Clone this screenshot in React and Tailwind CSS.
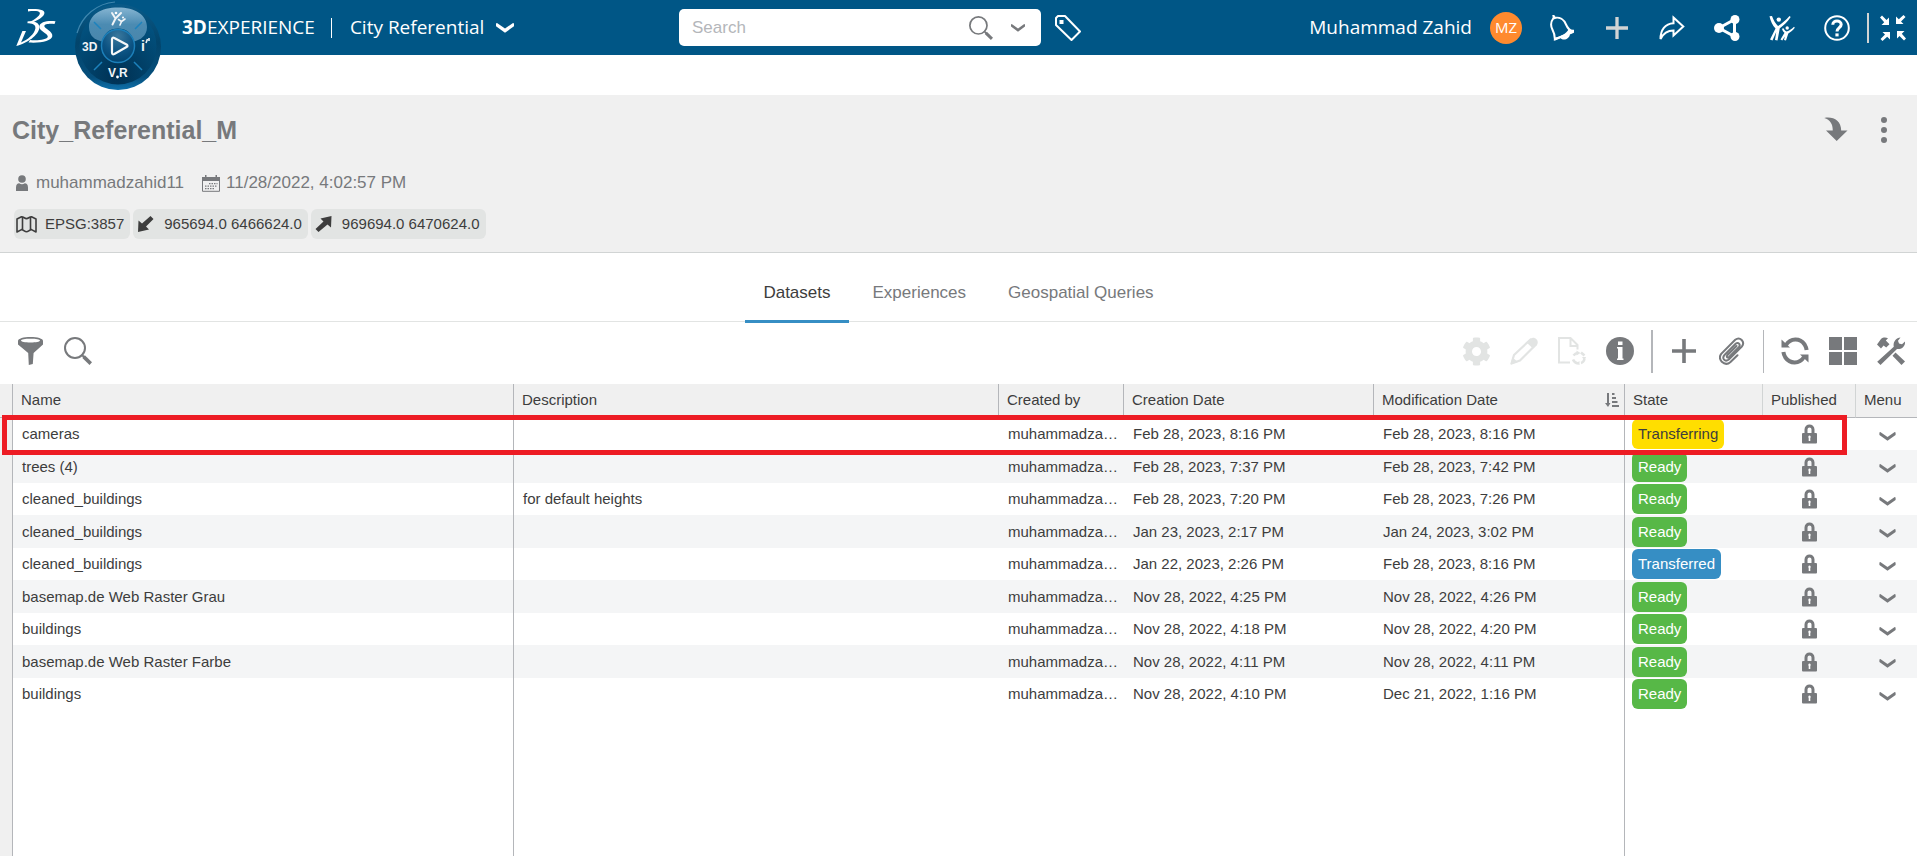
import React from "react";
import { FaCog } from "react-icons/fa";

const ROWS = [
  { name: "cameras", description: "", created: "Feb 28, 2023, 8:16 PM", modified: "Feb 28, 2023, 8:16 PM", state: "Transferring" },
  { name: "trees (4)", description: "", created: "Feb 28, 2023, 7:37 PM", modified: "Feb 28, 2023, 7:42 PM", state: "Ready" },
  { name: "cleaned_buildings", description: "for default heights", created: "Feb 28, 2023, 7:20 PM", modified: "Feb 28, 2023, 7:26 PM", state: "Ready" },
  { name: "cleaned_buildings", description: "", created: "Jan 23, 2023, 2:17 PM", modified: "Jan 24, 2023, 3:02 PM", state: "Ready" },
  { name: "cleaned_buildings", description: "", created: "Jan 22, 2023, 2:26 PM", modified: "Feb 28, 2023, 8:16 PM", state: "Transferred" },
  { name: "basemap.de Web Raster Grau", description: "", created: "Nov 28, 2022, 4:25 PM", modified: "Nov 28, 2022, 4:26 PM", state: "Ready" },
  { name: "buildings", description: "", created: "Nov 28, 2022, 4:18 PM", modified: "Nov 28, 2022, 4:20 PM", state: "Ready" },
  { name: "basemap.de Web Raster Farbe", description: "", created: "Nov 28, 2022, 4:11 PM", modified: "Nov 28, 2022, 4:11 PM", state: "Ready" },
  { name: "buildings", description: "", created: "Nov 28, 2022, 4:10 PM", modified: "Dec 21, 2022, 1:16 PM", state: "Ready" },
];

const STATE_STYLES = {
  Transferring: "bg-[#ffde00] text-[#3d3d3d]",
  Ready: "bg-[#57b847] text-white",
  Transferred: "bg-[#368ec4] text-white",
};

function BrandLogo() {
  return (
    <svg viewBox="0 0 40 38" className="h-[38px] w-10" fill="#fff" aria-hidden="true">
      <path d="M12 0C19 -.4 25.500 .2 27.600 2C31 5.500 23.500 11 14 14.200L13 13.500C19 10.600 24.600 6.500 23.800 3.800C23.200 1.600 17 2 12 2.400Z" />
      <path d="M11.500 12.400C17 11.600 23.600 13 23.400 18.500C23 26 11 34.500 .3 37L6.400 22H10L5 33.400C11.500 31 18.500 25 19.400 19.500C20 15 15.500 14.200 11.500 14.200Z" />
      <path d="M39.500 12.300L38.500 15C34 14.300 28.500 14.800 28.300 17C28.200 19.500 37.300 22.500 36.300 27.300C35.300 32 25 34.300 12.500 33.500L14 31C22 31.600 31.500 30.800 31.800 27.500C32 24.500 22.800 22 23.300 17.500C23.800 13 31.500 11.300 39.500 12.300Z" />
    </svg>
  );
}

function Compass() {
  return (
    <svg viewBox="0 0 88 92" className="h-[92px] w-[88px]" aria-hidden="true">
      <defs>
        <linearGradient id="rim" x1="0" y1="0" x2="0" y2="1">
          <stop offset="0" stopColor="#0a5a88" />
          <stop offset="0.45" stopColor="#02446b" />
          <stop offset="0.85" stopColor="#064f7c" />
          <stop offset="1" stopColor="#0f71ab" />
        </linearGradient>
        <radialGradient id="face" cx="0.5" cy="0.9" r="0.75">
          <stop offset="0" stopColor="#003153" />
          <stop offset="1" stopColor="#02507d" />
        </radialGradient>
        <linearGradient id="gloss" x1="0" y1="0" x2="0" y2="1">
          <stop offset="0" stopColor="#86b5d2" />
          <stop offset="0.5" stopColor="#4b8bb2" />
          <stop offset="1" stopColor="#4a86ab" />
        </linearGradient>
        <radialGradient id="hub" cx="0.5" cy="0.2" r="0.8">
          <stop offset="0" stopColor="#3a789d" />
          <stop offset="0.6" stopColor="#0d5484" />
          <stop offset="1" stopColor="#024470" />
        </radialGradient>
      </defs>
      <circle cx="44" cy="47" r="43" fill="url(#rim)" />
      <path d="M3 33A43 43 0 0 1 41 2" fill="none" stroke="#3f86ae" strokeWidth="1.200" />
      <circle cx="44" cy="46" r="38.500" fill="url(#face)" />
      <path d="M15 27C15 15 27 7.500 44 7.500S73 15 73 27C73 36 66 40 60 41.500C58 33 52 28.500 44 28.500S30 33 28 41.500C21 40 15 36 15 27Z" fill="url(#gloss)" />
      <path d="M20 22L27 29M68 22L61 29M20 70L28 62M68 70L60 62" stroke="#1d82bd" strokeWidth="1.500" />
      <circle cx="44" cy="46" r="16.500" fill="url(#hub)" stroke="#1c7fb9" strokeWidth="1.500" />
      <path d="M38 39.500Q38 37 40.300 38L52.500 44.500Q54.500 46 52.500 47L40.300 54Q38 55 38 52.500Z" fill="none" stroke="#f4f7f9" strokeWidth="2.200" strokeLinejoin="round" />
      <g stroke="#f0f4f7" fill="none" strokeLinecap="round">
        <path d="M38 13L41.500 18.500L38.500 24.500M41.500 18.500L47 13" strokeWidth="2" />
        <path d="M44.500 19.500L47.500 21.500L46 25M47.500 21.500L51 19" strokeWidth="1.600" />
      </g>
      <circle cx="42" cy="13" r="1.300" fill="#fff" />
      <circle cx="49" cy="17.400" r="1" fill="#fff" />
      <g fill="#f0f4f7" fontFamily="'Liberation Sans Narrow', 'Liberation Sans', Arial, sans-serif" fontWeight="700">
        <text x="8" y="50.500" fontSize="12">3D</text>
        <text x="34" y="77" fontSize="12">V</text>
        <text x="45" y="77" fontSize="12">R</text>
        <text x="67" y="51" fontSize="14">i</text>
      </g>
      <circle cx="43.500" cy="77" r="1.400" fill="#fff" />
      <path d="M72 43L73.500 39M75 41V38" stroke="#f0f4f7" strokeWidth="1.600" />
    </svg>
  );
}

function Icon({ box = "0 0 26 26", className = "size-[26px]", children, ...rest }) {
  return (
    <svg viewBox={box} className={className} aria-hidden="true" {...rest}>
      {children}
    </svg>
  );
}

function ChevronIcon({ className }) {
  return (
    <Icon box="0 0 18 10" className={className} fill="currentColor">
      <path d="M0 .6L1 0L9 5.600L17 0L18 .6V3.200L9 9.800L0 3.200Z" />
    </Icon>
  );
}

function SearchIcon({ className }) {
  return (
    <Icon box="0 0 28 28" className={className} fill="none" stroke="currentColor">
      <circle cx="11" cy="11" r="10" strokeWidth="2" />
      <path d="M17.500 17.500L20.500 20.500" strokeWidth="2" />
      <path d="M19.600 19.600L26.800 26.600" strokeWidth="3.600" />
    </Icon>
  );
}

function BellIcon() {
  return (
    <Icon fill="none" stroke="currentColor" strokeLinejoin="round">
      <path d="M4.200 3.500C1.600 7 1.400 10.500 3.400 14.500C5.500 18.500 6 20.500 5.800 24.500L24 17C20.500 15.500 18.600 13.200 17 9.500C14.800 4.300 10.500 2 6.500 2.800Z" strokeWidth="2" />
      <path d="M3.300 0H5.300L7 3L4 4.500Z" fill="currentColor" stroke="none" />
      <path d="M4.600 25.800L25 17.300V14.800L19.500 14.500C17 18.500 13 21 6 22.500ZM11.500 23C14 26 20.500 24.500 21 19Z" fill="currentColor" stroke="none" />
    </Icon>
  );
}

function PlusIcon({ className }) {
  return (
    <Icon box="0 0 24 24" className={className} stroke="currentColor" strokeWidth="3.600">
      <path d="M12 0V24M0 12H24" />
    </Icon>
  );
}

function ForwardIcon() {
  return (
    <Icon fill="none" stroke="currentColor" strokeWidth="2">
      <path d="M14.500 2.500L24.300 11.500L14.500 20.500V15.500C9 15.500 4.500 18 1.500 24C1.500 15 6 8.600 14.500 8.200Z" strokeLinejoin="miter" />
    </Icon>
  );
}

function NodesIcon() {
  return (
    <Icon fill="currentColor">
      <path d="M5 13L20.500 4.500V21.500Z" fill="none" stroke="currentColor" strokeWidth="3" />
      <circle cx="5" cy="13" r="5" />
      <circle cx="21" cy="4.500" r="4.500" />
      <circle cx="21" cy="21.500" r="4.500" />
    </Icon>
  );
}

function PeopleIcon() {
  return (
    <Icon fill="currentColor">
      <path d="M.5 1.200L3 1C4.500 5.500 6.500 8.500 9 11C13 8.500 17 5 20.500 1L21.700 2C18.500 7 14.500 10.500 10.800 13.200L8.500 25.500L6 25L7.200 17L3.500 25.500L1 24.500L6.500 13.500C3.500 10.500 1.500 6 .5 1.200Z" />
      <path d="M13 13.800L14.500 13.300C15.200 14.800 16.200 15.800 17.600 16.600C20.500 15.500 23 14 25 11.800L25.800 12.800C24 15.500 21.800 17.200 19.300 18.400L17 25.500L15 25L15.800 21.500L13.300 25.500L11.500 24.500L15.500 17.800C14.200 16.800 13.400 15.500 13 13.800Z" />
      <circle cx="9.800" cy="4.600" r="2.200" />
      <circle cx="18.200" cy="13" r="1.700" />
    </Icon>
  );
}

function HelpIcon() {
  return (
    <Icon fill="none" stroke="currentColor">
      <circle cx="13" cy="13" r="11.800" strokeWidth="2" />
      <path d="M8.800 9.800C8.800 4.800 17.200 4.800 17.200 9.600C17.200 12.800 13 12.600 13 16.600" strokeWidth="3" />
      <rect x="11.400" y="18.400" width="3.200" height="3" fill="currentColor" stroke="none" />
    </Icon>
  );
}

function CollapseIcon() {
  return (
    <Icon fill="currentColor">
      {[0, 90, 180, 270].map((angle) => (
        <g key={angle} transform={`rotate(${angle} 13 13)`}>
          <path d="M2 .5L6.500 5L9 2.500V10H1.500L4.200 7.200L0 2.500Z" />
        </g>
      ))}
    </Icon>
  );
}

function TagIcon() {
  return (
    <Icon fill="none" stroke="currentColor" strokeWidth="2" strokeLinejoin="round">
      <path d="M1 10V3L3 1H10L25 16.500L16.500 25Z" />
      <rect x="4.500" y="5" width="4" height="4" fill="currentColor" stroke="none" />
    </Icon>
  );
}

function PersonIcon() {
  return (
    <Icon box="0 0 12 16" className="h-4 w-3" fill="currentColor">
      <circle cx="6" cy="4" r="3.800" />
      <path d="M0 16V12.500C0 9.500 1.500 8.300 3.200 8.300C5 9.500 7 9.500 8.800 8.300C10.500 8.300 12 9.500 12 12.500V16Z" />
    </Icon>
  );
}

function CalendarIcon() {
  return (
    <Icon box="0 0 18 17" className="h-[17px] w-[18px]" fill="currentColor">
      <path d="M0 2H3V0H4.500V2H13.500V0H15V2H18V6H0Z" />
      <path d="M.5 5.500V16.300H17.500V5.500" fill="none" stroke="currentColor" />
      <path d="M7 8.700H15.500M3 11.200H15.500M3 13.700H12" stroke="currentColor" strokeWidth="1.300" strokeDasharray="1.500 1" />
    </Icon>
  );
}

function MapIcon() {
  return (
    <Icon box="0 0 21 17" className="h-[17px] w-[21px]" fill="none" stroke="currentColor" strokeWidth="1.600" strokeLinejoin="round">
      <path d="M1 3L5.500 .8C8 1 8.500 2.600 10.500 2.600S13 1 15.500 .8L20 3V16L15.500 13.600C13 13.800 12.500 15.800 10.500 15.800S8 13.800 5.500 13.600L1 16ZM6.500 1V13.600M14.500 1V13.600" />
    </Icon>
  );
}

function SouthWestIcon() {
  return (
    <Icon box="0 0 17 16" className="h-4 w-[17px]" fill="currentColor">
      <path d="M13.500 0L16.500 3L9 10.500L12 13.500L1 16L1.500 4.500L5 7.500Z" />
    </Icon>
  );
}

function NorthEastIcon() {
  return (
    <Icon box="0 0 17 16" className="h-4 w-[17px]" fill="currentColor">
      <path d="M3.500 16L.500 13L8.500 5.500L5.500 2.500L16.500 0L16 11.500L12.500 8.500Z" />
    </Icon>
  );
}

function CurvedDownIcon() {
  return (
    <Icon box="0 0 24 24" className="size-6" fill="currentColor">
      <path d="M.3 .9C9-.8 17.200 3.500 17.200 13.500H23.500L12.700 24L2 13.500H8.700C9 7.500 6.500 2.800 .3 .9Z" />
    </Icon>
  );
}

function FilterIcon() {
  return (
    <Icon box="0 0 25 28" className="h-7 w-[25px]" fill="currentColor">
      <path fillRule="evenodd" d="M0 4C0 1.500 5.500 0 12.500 0S25 1.500 25 4V7.500L15.600 16L14.800 27L10.800 28L10.200 16L0 7.500ZM3 3.600C3 4.800 7 5.600 12.500 5.600S22 4.800 22 3.600S18 1.800 12.500 1.800S3 2.400 3 3.600Z" />
    </Icon>
  );
}

function PencilIcon() {
  return (
    <Icon box="0 0 28 28" className="size-7" fill="none" stroke="currentColor" strokeLinejoin="round">
      <path d="M1.500 26.500L4 18L20.500 2.500L26 7.500L10 23.500Z" strokeWidth="2.200" />
      <path d="M.500 27.500L2.500 20.500L8 25Z" fill="currentColor" stroke="none" />
      <path d="M16.500 5.500L23 11.500L26.800 8C30 4 24.500 -1.500 20.500 1.800Z" fill="currentColor" stroke="none" />
    </Icon>
  );
}

function DocumentSyncIcon() {
  return (
    <Icon box="0 0 28 28" className="size-7" fill="none" stroke="currentColor" strokeWidth="2">
      <path d="M12 25.500H1V1H12.500L19.500 8V12.500M12.500 1V9H19.500" />
      <path d="M15.500 18.500Q17.500 16 20 16M23 15.500L26.500 18.500M26.500 22Q25.500 25.500 23 26M20 26.500Q16.500 26 15 22.500" strokeWidth="2.600" />
      <path d="M18.500 13.500L22.500 16L18.500 18.500ZM24 20H28L26.500 24ZM21.500 24V28.500L18.500 26Z" fill="currentColor" stroke="none" />
    </Icon>
  );
}

function InfoIcon() {
  return (
    <Icon box="0 0 28 28" className="size-7">
      <circle cx="14" cy="14" r="14" fill="currentColor" />
      <path d="M12 4.500H16.500V8H12ZM11 10H16.500V21.500H17.500V23H11V21.500H12V11.500H11Z" fill="#fff" />
    </Icon>
  );
}

function ClipIcon() {
  return (
    <Icon box="0 0 26 28" className="h-7 w-[26px]" fill="none" stroke="currentColor" strokeWidth="2" strokeLinecap="round">
      <path d="M17.500 9L8.500 18C7 20 8.500 21.300 10.300 19.800L19.800 10.200C22 7.500 19.300 4.600 16.600 6.800L5.500 18C2.500 21.500 6 25.500 9.800 22.500L22.800 9.600C26.500 5 21 -1 16.200 2.800L2.200 16.800C.2 19.500 .8 22.500 2.800 24.800C5.500 27.300 8.800 27.400 11.500 25L18.500 18.200" />
    </Icon>
  );
}

function RefreshIcon() {
  return (
    <Icon box="0 0 28 28" className="size-7" fill="none" stroke="currentColor" strokeWidth="4">
      <path d="M5 8C9.500 .8 19 .8 23.600 7.500C24.800 9.500 25.400 11 25.600 13M23 20C18.500 27.200 9 27.200 4.400 20.500C3.200 18.500 2.600 17 2.400 15" />
      <path d="M.5 2.500V10.500H9ZM27.500 25.500V17.500H19Z" fill="currentColor" stroke="none" />
    </Icon>
  );
}

function TilesIcon() {
  return (
    <Icon box="0 0 28 28" className="size-7" fill="currentColor">
      <path d="M0 0H13V13H0ZM15 0H28V13H15ZM0 15H13V28H0ZM15 15H28V28H15Z" />
    </Icon>
  );
}

function ToolsIcon() {
  return (
    <Icon box="0 0 28 28" className="size-7" fill="currentColor">
      <path d="M4 2C6 .3 8.500 .3 11 1.200L8.800 3.400L12.500 7.200L9.200 10.500L6.600 8.600L4 11.500L0 7.500Z" />
      <path d="M18.500 15.500L28 24.500L24.500 28L15.500 18.800Z" />
      <path d="M.200 24.800L16.800 9.800C15.800 5.500 18.500 1 23.500 .5L21 3.800L22 6.500L25 7.200L28 4.500C28.500 9 25 12.500 20 12L3.500 28Z" />
    </Icon>
  );
}

function SortIcon() {
  return (
    <Icon box="0 0 14 14" className="size-3.5" fill="currentColor">
      <path d="M2 0H4V10H5.500L3 14L0 10H2ZM7 0H9.500V2H7ZM7 4H11V6H7ZM7 8H12.500V10H7ZM7 12H14V14H7Z" />
    </Icon>
  );
}

function LockIcon() {
  return (
    <Icon box="0 0 15 20" className="mx-auto h-5 w-[15px]">
      <path d="M4 11V5.500C4 .8 11 .8 11 5.500V11" fill="none" stroke="#77797c" strokeWidth="3" />
      <rect y="9" width="15" height="10.500" rx="1" fill="#77797c" />
      <path d="M7.500 11.500A1.500 1.500 0 0 1 8.300 14V17H6.700V14A1.500 1.500 0 0 1 7.500 11.500Z" fill="#fff" />
    </Icon>
  );
}

function TopButton({ label, className = "", children }) {
  return (
    <button type="button" aria-label={label} className={`flex h-[55px] w-[55px] items-center justify-center ${className}`}>
      {children}
    </button>
  );
}

function ToolButton({ label, disabled, children }) {
  return (
    <button
      type="button"
      aria-label={label}
      disabled={disabled}
      className="flex size-12 items-center justify-center text-[#77797c] disabled:text-[#e2e4e3]"
    >
      {children}
    </button>
  );
}

function TopBar() {
  return (
    <header className="flex h-[55px] items-center bg-[#005686] font-['Open_Sans','Noto_Sans',sans-serif] text-[19px] text-white">
      <div className="flex w-[679px] shrink-0 items-center">
        <a href="#home" aria-label="Home" className="ml-4">
          <BrandLogo />
        </a>
        <button type="button" aria-label="Compass" className="relative z-10 ml-[18px] h-[55px] w-[88px]">
          <Compass />
        </button>
        <span className="ml-5">
          <b>3D</b>EXPERIENCE
        </span>
        <span className="ml-4 h-5 w-px bg-white" />
        <button type="button" className="ml-[18px] flex items-center gap-3">
          City Referential
          <ChevronIcon className="h-2.5 w-[18px]" />
        </button>
      </div>
      <form className="flex h-[37px] w-[362px] shrink-0 items-center rounded-[5px] bg-white pl-[13px] pr-4 text-[#77797c]">
        <input
          type="search"
          aria-label="Search"
          placeholder="Search"
          className="min-w-0 flex-1 font-['Liberation_Sans',Arial,sans-serif] text-[17px] outline-none placeholder:text-[#b4b6ba]"
        />
        <button type="button" aria-label="Run search">
          <SearchIcon className="size-6" />
        </button>
        <button type="button" aria-label="Search options" className="ml-[18px]">
          <ChevronIcon className="h-2 w-[14px]" />
        </button>
      </form>
      <button type="button" aria-label="Tags" className="ml-3.5">
        <TagIcon />
      </button>
      <div className="ml-auto flex items-center">
        <span>Muhammad Zahid</span>
        <span className="ml-[18px] mr-3 flex size-8 items-center justify-center rounded-full bg-[#ff8a2e] text-[15px]">MZ</span>
        <TopButton label="Notifications"><BellIcon /></TopButton>
        <TopButton label="Add" className="text-[#d1d4d4]"><PlusIcon className="size-[22px]" /></TopButton>
        <TopButton label="Forward"><ForwardIcon /></TopButton>
        <TopButton label="Share"><NodesIcon /></TopButton>
        <TopButton label="Communities"><PeopleIcon /></TopButton>
        <TopButton label="Help"><HelpIcon /></TopButton>
        <span className="ml-[3px] h-[30px] w-0.5 bg-[#d1d4d4]" />
        <button type="button" aria-label="Exit full screen" className="mx-[11px]">
          <CollapseIcon />
        </button>
      </div>
    </header>
  );
}

function Chip({ icon, children }) {
  return (
    <span className="flex h-[30px] items-center gap-2 rounded-md bg-[#e2e4e3] pl-0.5 pr-1.5 text-[15px] text-[#3d3d3d]">
      {icon}
      {children}
    </span>
  );
}

function Summary() {
  return (
    <section className="mt-10 flex justify-between border-b border-[#d1d4d4] bg-[#f0f0f0] pb-[13px] pl-3 pr-[30px] pt-5 text-[#77797c]">
      <div>
        <h1 className="text-[25px] font-bold leading-[30px]">City_Referential_M</h1>
        <p className="mt-7 flex h-5 items-center pl-1 text-[17px] leading-5">
          <PersonIcon />
          <span className="ml-2">muhammadzahid11</span>
          <span className="ml-[18px]"><CalendarIcon /></span>
          <span className="ml-1.5">11/28/2022, 4:02:57 PM</span>
        </p>
        <div className="mt-4 flex gap-[3px] pl-0.5">
          <Chip icon={<MapIcon />}>EPSG:3857</Chip>
          <Chip icon={<span className="px-0.5"><SouthWestIcon /></span>}>965694.0 6466624.0</Chip>
          <Chip icon={<span className="px-0.5"><NorthEastIcon /></span>}>969694.0 6470624.0</Chip>
        </div>
      </div>
      <div className="flex items-start gap-[33px] pt-0.5">
        <button type="button" aria-label="Download"><CurvedDownIcon /></button>
        <button type="button" aria-label="More actions">
          <Icon box="0 0 6 26" className="h-[26px] w-1.5" fill="currentColor">
            <circle cx="3" cy="3" r="3" />
            <circle cx="3" cy="13" r="3" />
            <circle cx="3" cy="23" r="3" />
          </Icon>
        </button>
      </div>
    </section>
  );
}

function Tab({ selected, children }) {
  return (
    <button
      type="button"
      role="tab"
      aria-selected={selected}
      className="h-[70px] border-b-3 border-transparent px-[18px] pt-3 aria-selected:border-[#368ec4] aria-selected:text-[#3d3d3d]"
    >
      {children}
    </button>
  );
}

function Tabs() {
  return (
    <nav className="border-b border-[#e2e4e3]">
      <div role="tablist" className="-mb-0.5 flex justify-center gap-1.5 text-[17px] text-[#77797c]">
        <Tab selected>Datasets</Tab>
        <Tab selected={false}>Experiences</Tab>
        <Tab selected={false}>Geospatial Queries</Tab>
      </div>
    </nav>
  );
}

function Toolbar() {
  return (
    <div className="flex h-[62px] items-center justify-between pb-1 pl-1.5 pr-0.5">
      <div className="flex">
        <ToolButton label="Filter"><FilterIcon /></ToolButton>
        <ToolButton label="Find"><SearchIcon className="size-7" /></ToolButton>
      </div>
      <div className="flex items-center">
        <ToolButton label="Settings" disabled><FaCog className="size-[29px]" /></ToolButton>
        <ToolButton label="Edit" disabled><PencilIcon /></ToolButton>
        <ToolButton label="Update dataset" disabled><DocumentSyncIcon /></ToolButton>
        <ToolButton label="Information"><InfoIcon /></ToolButton>
        <span className="mx-[7px] h-[43px] w-0.5 bg-[#b4b6ba]" />
        <ToolButton label="Add"><PlusIcon className="size-6" /></ToolButton>
        <ToolButton label="Attach"><ClipIcon /></ToolButton>
        <span className="mx-[7px] h-[43px] w-px bg-[#b4b6ba]" />
        <ToolButton label="Refresh"><RefreshIcon /></ToolButton>
        <ToolButton label="Tile view"><TilesIcon /></ToolButton>
        <ToolButton label="Tools"><ToolsIcon /></ToolButton>
      </div>
    </div>
  );
}

const HEAD = "border-b border-r border-[#b4b6ba] pb-0.5 pl-2 text-left font-normal";
const HEAD_LIGHT = "border-b border-r border-b-[#b4b6ba] border-r-[#d1d4d4] pb-0.5 pl-2 text-left font-normal";
const CELL = "truncate pl-[9px] pr-1";

function Datasets() {
  return (
    <div className="relative min-h-0 flex-1">
      <table className="h-full w-full table-fixed border-separate border-spacing-0 text-[15px] leading-5 text-[#3d3d3d]">
        <colgroup>
          <col className="w-[13px]" />
          <col className="w-[501px]" />
          <col />
          <col className="w-[125px]" />
          <col className="w-[250px]" />
          <col className="w-[251px]" />
          <col className="w-[138px]" />
          <col className="w-[93px]" />
          <col className="w-[61px]" />
        </colgroup>
        <thead className="bg-[#f0f0f0]">
          <tr className="h-[34px]">
            <td className="border-b border-r border-[#b4b6ba]" />
            <th className={HEAD}>Name</th>
            <th className={HEAD}>Description</th>
            <th className={HEAD}>Created by</th>
            <th className={HEAD}>Creation Date</th>
            <th className={HEAD} aria-sort="descending">
              <span className="flex items-center justify-between pr-[5px]">
                Modification Date
                <span className="text-[#77797c]"><SortIcon /></span>
              </span>
            </th>
            <th className={HEAD_LIGHT}>State</th>
            <th className={HEAD_LIGHT}>Published</th>
            <th className="border-b border-[#b4b6ba] pb-0.5 pl-2 text-left font-normal">Menu</th>
          </tr>
        </thead>
        <tbody>
          {ROWS.map((row, index) => (
            <tr key={index} className="h-8 even:h-[33px] even:bg-[#f4f5f6]">
              <td className="border-r border-[#b4b6ba] bg-[#f0f0f0]" />
              <td className={`${CELL} border-r border-[#b4b6ba]`}>{row.name}</td>
              <td className={CELL}>{row.description}</td>
              <td className={CELL}>muhammadza…</td>
              <td className={CELL}>{row.created}</td>
              <td className={`${CELL} border-r border-[#b4b6ba]`}>{row.modified}</td>
              <td className="pl-[7px]">
                <span className={`flex h-[30px] w-fit items-center rounded-md px-1.5 ${STATE_STYLES[row.state]}`}>{row.state}</span>
              </td>
              <td><LockIcon /></td>
              <td>
                <button type="button" aria-label="Row menu" className="flex w-full justify-center pl-0.5 pt-1 text-[#77797c]">
                  <ChevronIcon className="h-[9px] w-[17px]" />
                </button>
              </td>
            </tr>
          ))}
          <tr>
            <td className="border-r border-[#b4b6ba] bg-[#f0f0f0]" />
            <td className="border-r border-[#b4b6ba]" />
            <td colSpan={4} className="border-r border-[#b4b6ba]" />
            <td colSpan={3} />
          </tr>
        </tbody>
      </table>
      <div className="pointer-events-none absolute left-0.5 right-[70px] top-[31px] h-10 border-5 border-[#ed1c24]" />
    </div>
  );
}

export default function App() {
  return (
    <div className="flex h-screen flex-col bg-white font-['Liberation_Sans',Arial,sans-serif]">
      <TopBar />
      <Summary />
      <Tabs />
      <Toolbar />
      <Datasets />
    </div>
  );
}
